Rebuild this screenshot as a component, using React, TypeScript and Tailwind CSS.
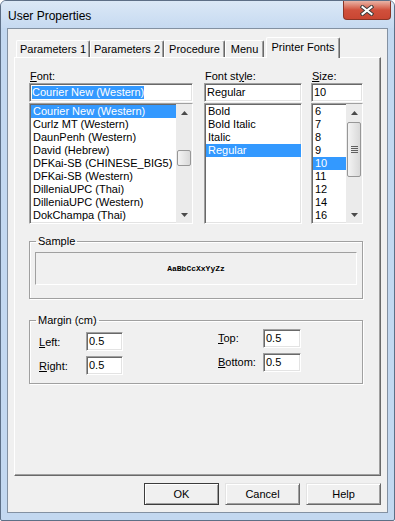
import React from "react";

const sunken =
  "border border-t-[#a0a0a0] border-l-[#a0a0a0] border-r-white border-b-white shadow-[inset_1px_1px_0_#696969,inset_-1px_-1px_0_#e3e3e3]";

function Arrow({ down }: { down?: boolean }) {
  return (
    <svg width="7" height="4" viewBox="0 0 7 4">
      {down ? <path d="M0 0H7L3.5 4Z" fill="#4a4a4a" /> : <path d="M0 4H7L3.5 0Z" fill="#4a4a4a" />}
    </svg>
  );
}

function ScrollBar({ thumbTop, thumbHeight, grip }: { thumbTop: number; thumbHeight: number; grip?: boolean }) {
  return (
    <div className="flex w-[16px] flex-col bg-[#ebebeb]">
      <div className="flex h-[17px] items-center justify-center">
        <Arrow />
      </div>
      <div className="flex-1 px-[1px]">
        <div
          className="flex items-center justify-center rounded-[2px] border border-[#979797] bg-linear-to-r from-[#f4f4f4] to-[#d9d9d9]"
          style={{ marginTop: thumbTop, height: thumbHeight }}
        >
          {grip && (
            <div className="flex flex-col gap-[1px]">
              <div className="h-[1px] w-[7px] bg-[#606060]" />
              <div className="h-[1px] w-[7px] bg-[#606060]" />
              <div className="h-[1px] w-[7px] bg-[#606060]" />
              <div className="h-[1px] w-[7px] bg-[#606060]" />
            </div>
          )}
        </div>
      </div>
      <div className="flex h-[17px] items-center justify-center">
        <Arrow down />
      </div>
    </div>
  );
}

function ListBox({
  items,
  selected,
  width,
  scroll,
}: {
  items: string[];
  selected: number;
  width: number;
  scroll?: { top: number; height: number; grip?: boolean };
}) {
  return (
    <div className={`flex h-[121px] bg-white ${sunken}`} style={{ width }}>
      <div className="flex-1 overflow-hidden pl-[1px] pt-[1px]">
        {items.map((it, i) => (
          <div
            key={it}
            className={`h-[13px] whitespace-nowrap pl-[2px] leading-[13px] ${i === selected ? "bg-[#3399ff] text-white" : ""}`}
          >
            {it}
          </div>
        ))}
      </div>
      {scroll && <ScrollBar thumbTop={scroll.top} thumbHeight={scroll.height} grip={scroll.grip} />}
    </div>
  );
}

function Field({ value, width, children }: { value?: string; width: number; children?: React.ReactNode }) {
  return (
    <div className={`flex h-[19px] items-center bg-white pl-[2px] ${sunken}`} style={{ width }}>
      {children ?? value}
    </div>
  );
}

function Btn({ label, isDefault }: { label: string; isDefault?: boolean }) {
  return (
    <div
      className={`flex h-[22px] w-[75px] items-center justify-center border ${
        isDefault ? "border-[#3c3c3c]" : "border-t-[#e3e3e3] border-l-[#e3e3e3] border-r-[#696969] border-b-[#696969]"
      } shadow-[inset_1px_1px_0_#ffffff,inset_-1px_-1px_0_#a0a0a0]`}
    >
      {label}
    </div>
  );
}

export default function App() {
  const tabs = [
    { label: "Parameters 1", w: 74 },
    { label: "Parameters 2", w: 74 },
    { label: "Procedure", w: 61 },
    { label: "Menu", w: 39 },
  ];
  const fonts = [
    "Courier New (Western)",
    "Curlz MT (Western)",
    "DaunPenh (Western)",
    "David (Hebrew)",
    "DFKai-SB (CHINESE_BIG5)",
    "DFKai-SB (Western)",
    "DilleniaUPC (Thai)",
    "DilleniaUPC (Western)",
    "DokChampa (Thai)",
  ];
  const styles = ["Bold", "Bold Italic", "Italic", "Regular"];
  const sizes = ["6", "7", "8", "9", "10", "11", "12", "14", "16"];

  return (
    <div className="flex h-[521px] w-[395px] flex-col overflow-hidden rounded-t-[6px] rounded-b-[2px] border border-[#5d6f86] bg-[#c3d8f0] font-['Liberation_Sans',Arial,sans-serif] text-[11px] leading-[13px] text-black">
      {/* title bar */}
      <div className="flex h-[27px] justify-between bg-linear-to-b from-[#dbe8f6] to-[#c6daf1]">
        <div className="pl-[7px] pt-[8px] text-[12px] leading-[14px]">User Properties</div>
        <div className="mr-[3px] flex h-[19px] w-[48px] items-center justify-center rounded-b-[4px] border border-t-0 border-[#8a3527] bg-linear-to-b from-[#e8b3a6] via-[#d0503c] to-[#c94632]">
          <svg width="14" height="11" viewBox="0 0 14 11">
            <path d="M2.5 2L11.5 9M11.5 2L2.5 9" stroke="#3b3b3b" strokeWidth="4" strokeLinecap="square" />
            <path d="M2.5 2L11.5 9M11.5 2L2.5 9" stroke="#ffffff" strokeWidth="2" strokeLinecap="square" />
          </svg>
        </div>
      </div>

      {/* client area */}
      <div className="mx-[6px] flex h-[485px] flex-col border border-[#8391a2] bg-[#f0f0f0] px-[6px] pt-[8px]">
        {/* tab strip */}
        <div className="flex h-[20px] items-end pl-[2px]">
          {tabs.map((t) => (
            <div
              key={t.label}
              className="flex h-[17px] items-center justify-center rounded-t-[2px] border-t border-l border-r border-t-white border-l-white border-r-[#696969] shadow-[inset_-1px_0_0_#a0a0a0]"
              style={{ width: t.w }}
            >
              {t.label}
            </div>
          ))}
          <div className="relative z-10 -mb-px ml-[2px] flex h-[21px] w-[74px] items-start justify-center rounded-t-[2px] border-t border-l border-r border-t-white border-l-white border-r-[#696969] bg-[#f0f0f0] pt-[3px] shadow-[inset_-1px_0_0_#a0a0a0]">
            Printer Fonts
          </div>
        </div>

        {/* tab page */}
        <div className="h-[419px] border border-t-white border-l-white border-r-[#696969] border-b-[#696969] pl-[14px] pt-[12px] shadow-[inset_-1px_-1px_0_#a0a0a0]">
          <div className="flex">
            <div className="flex w-[164px] flex-col">
              <div className="pl-[1px]">
                <span className="underline underline-offset-1">F</span>ont:
              </div>
              <Field width={164}>
                <span className="bg-[#3399ff] text-white">Courier New (Western)</span>
              </Field>
              <div className="mt-[1px]">
                <ListBox items={fonts} selected={0} width={164} scroll={{ top: 29, height: 16 }} />
              </div>
            </div>
            <div className="ml-[11px] flex w-[98px] flex-col">
              <div className="pl-[1px]">
                Font st<span className="underline underline-offset-1">y</span>le:
              </div>
              <Field width={98} value="Regular" />
              <div className="mt-[1px]">
                <ListBox items={styles} selected={3} width={98} />
              </div>
            </div>
            <div className="ml-[9px] flex w-[52px] flex-col">
              <div className="pl-[1px]">
                <span className="underline underline-offset-1">S</span>ize:
              </div>
              <Field width={52} value="10" />
              <div className="mt-[1px]">
                <ListBox items={sizes} selected={4} width={52} scroll={{ top: 1, height: 55, grip: true }} />
              </div>
            </div>
          </div>

          {/* sample */}
          <fieldset className="mt-[11px] h-[64px] w-[334px] border border-[#a0a0a0] shadow-[1px_1px_0_#ffffff,inset_1px_1px_0_#ffffff]">
            <legend className="ml-[6px] px-[2px]">Sample</legend>
            <div className="mx-[5px] mt-[4px] flex h-[33px] items-center justify-center border border-t-[#a0a0a0] border-l-[#a0a0a0] border-r-white border-b-white">
              <span className="font-['Liberation_Mono',monospace] text-[8px] font-bold leading-[10px]">AaBbCcXxYyZz</span>
            </div>
          </fieldset>

          {/* margins */}
          <fieldset className="mt-[15px] h-[70px] w-[334px] border border-[#a0a0a0] shadow-[1px_1px_0_#ffffff,inset_1px_1px_0_#ffffff]">
            <legend className="ml-[6px] px-[2px]">Margin (cm)</legend>
            <div className="flex">
              <div className="ml-[9px] mt-[5px] flex w-[179px] flex-col gap-[5px]">
                <div className="flex items-center">
                  <div className="w-[47px] pt-[1px]">
                    <span className="underline underline-offset-1">L</span>eft:
                  </div>
                  <Field width={37} value="0.5" />
                </div>
                <div className="flex items-center">
                  <div className="w-[47px] pt-[1px]">
                    <span className="underline underline-offset-1">R</span>ight:
                  </div>
                  <Field width={37} value="0.5" />
                </div>
              </div>
              <div className="mt-[2px] flex flex-col gap-[5px]">
                <div className="flex items-center">
                  <div className="w-[45px]">
                    <span className="underline underline-offset-1">T</span>op:
                  </div>
                  <Field width={38} value="0.5" />
                </div>
                <div className="flex items-center">
                  <div className="w-[45px]">
                    <span className="underline underline-offset-1">B</span>ottom:
                  </div>
                  <Field width={38} value="0.5" />
                </div>
              </div>
            </div>
          </fieldset>
        </div>

        {/* buttons */}
        <div className="mt-[7px] flex justify-end gap-[6px]">
          <Btn label="OK" isDefault />
          <Btn label="Cancel" />
          <Btn label="Help" />
        </div>
      </div>
    </div>
  );
}
